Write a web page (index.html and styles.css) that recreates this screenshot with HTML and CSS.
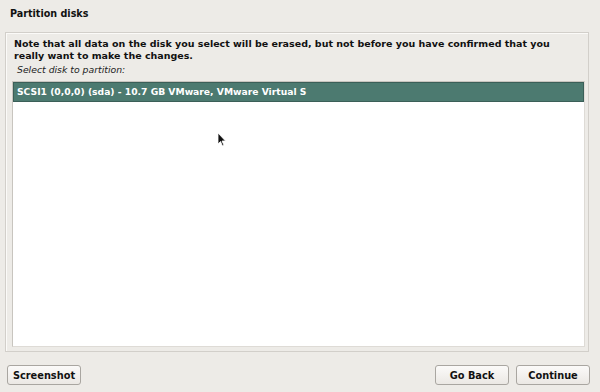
FILE: index.html
```html
<!DOCTYPE html>
<html>
<head>
    <title>Partition disks</title>
    <link rel="stylesheet" href="styles.css">
</head>
<body>
    <div class="title">Partition disks</div>

    <div class="panel">
        <p class="note">Note that all data on the disk you select will be erased, but not before you have confirmed that you really want to make the changes.</p>
        <p class="prompt">Select disk to partition:</p>
        <div class="list">
            <div class="row selected">SCSI1 (0,0,0) (sda) - 10.7 GB VMware, VMware Virtual S</div>
            <svg class="cursor" width="10" height="16" viewBox="0 0 10 16">
                <path d="M1 1 L1 12 L3.5 9.5 L5.5 14 L7 13.3 L5 9 L8.5 9 Z" fill="#111" stroke="#fff" stroke-width="0.8"/>
            </svg>
        </div>
    </div>

    <div class="buttons">
        <button class="btn">Screenshot</button>
        <div class="spacer"></div>
        <button class="btn">Go Back</button>
        <button class="btn">Continue</button>
    </div>
</body>
</html>
```

FILE: styles.css
```css
body {
    margin: 0;
    background: #edebe7;
    font-family: "DejaVu Sans", sans-serif;
    color: #111;
    width: 600px;
    height: 392px;
    overflow: hidden;
}
.title {
    font-weight: bold;
    font-size: 9.6px;
    padding: 8px 10px 0 10px;
    height: 24px;
}
.panel {
    margin: 0 11px 0 5px;
    height: 318px;
    border: 1px solid #d2cfca;
    box-shadow: inset 1px 1px 0 #fbfaf8;
    display: flex;
    flex-direction: column;
}
.note {
    font-weight: bold;
    font-size: 9.5px;
    line-height: 12px;
    margin: 5px 30px 0 8px;
}
.prompt {
    font-style: italic;
    font-size: 9.3px;
    margin: 2px 0 0 11px;
    color: #222;
}
.list {
    position: relative;
    flex: 1;
    margin: 6px 3px 4px 6px;
    background: #ffffff;
    border: 1px solid #c8c5bf;
    border-right-color: #dedbd6;
    border-bottom-color: #dedbd6;
}
.row {
    font-size: 9.2px;
    padding: 2px 3px;
    height: 14px;
    line-height: 14px;
}
.selected {
    background: #4c7a70;
    color: #fff;
    font-weight: bold;
    border: 1px solid #3b5f58;
}
.cursor {
    position: absolute;
    left: 204px;
    top: 50px;
}
.buttons {
    display: flex;
    gap: 7px;
    padding: 13px 10px 0 7px;
}
.spacer {
    flex: 1;
}
.btn {
    width: 74px;
    height: 20px;
    font-family: "DejaVu Sans", sans-serif;
    font-weight: bold;
    font-size: 9.8px;
    color: #111;
    background: linear-gradient(#fbfaf9, #ebe8e4);
    border: 1px solid #a9a6a1;
    border-radius: 3px;
    padding: 0;
}
```
